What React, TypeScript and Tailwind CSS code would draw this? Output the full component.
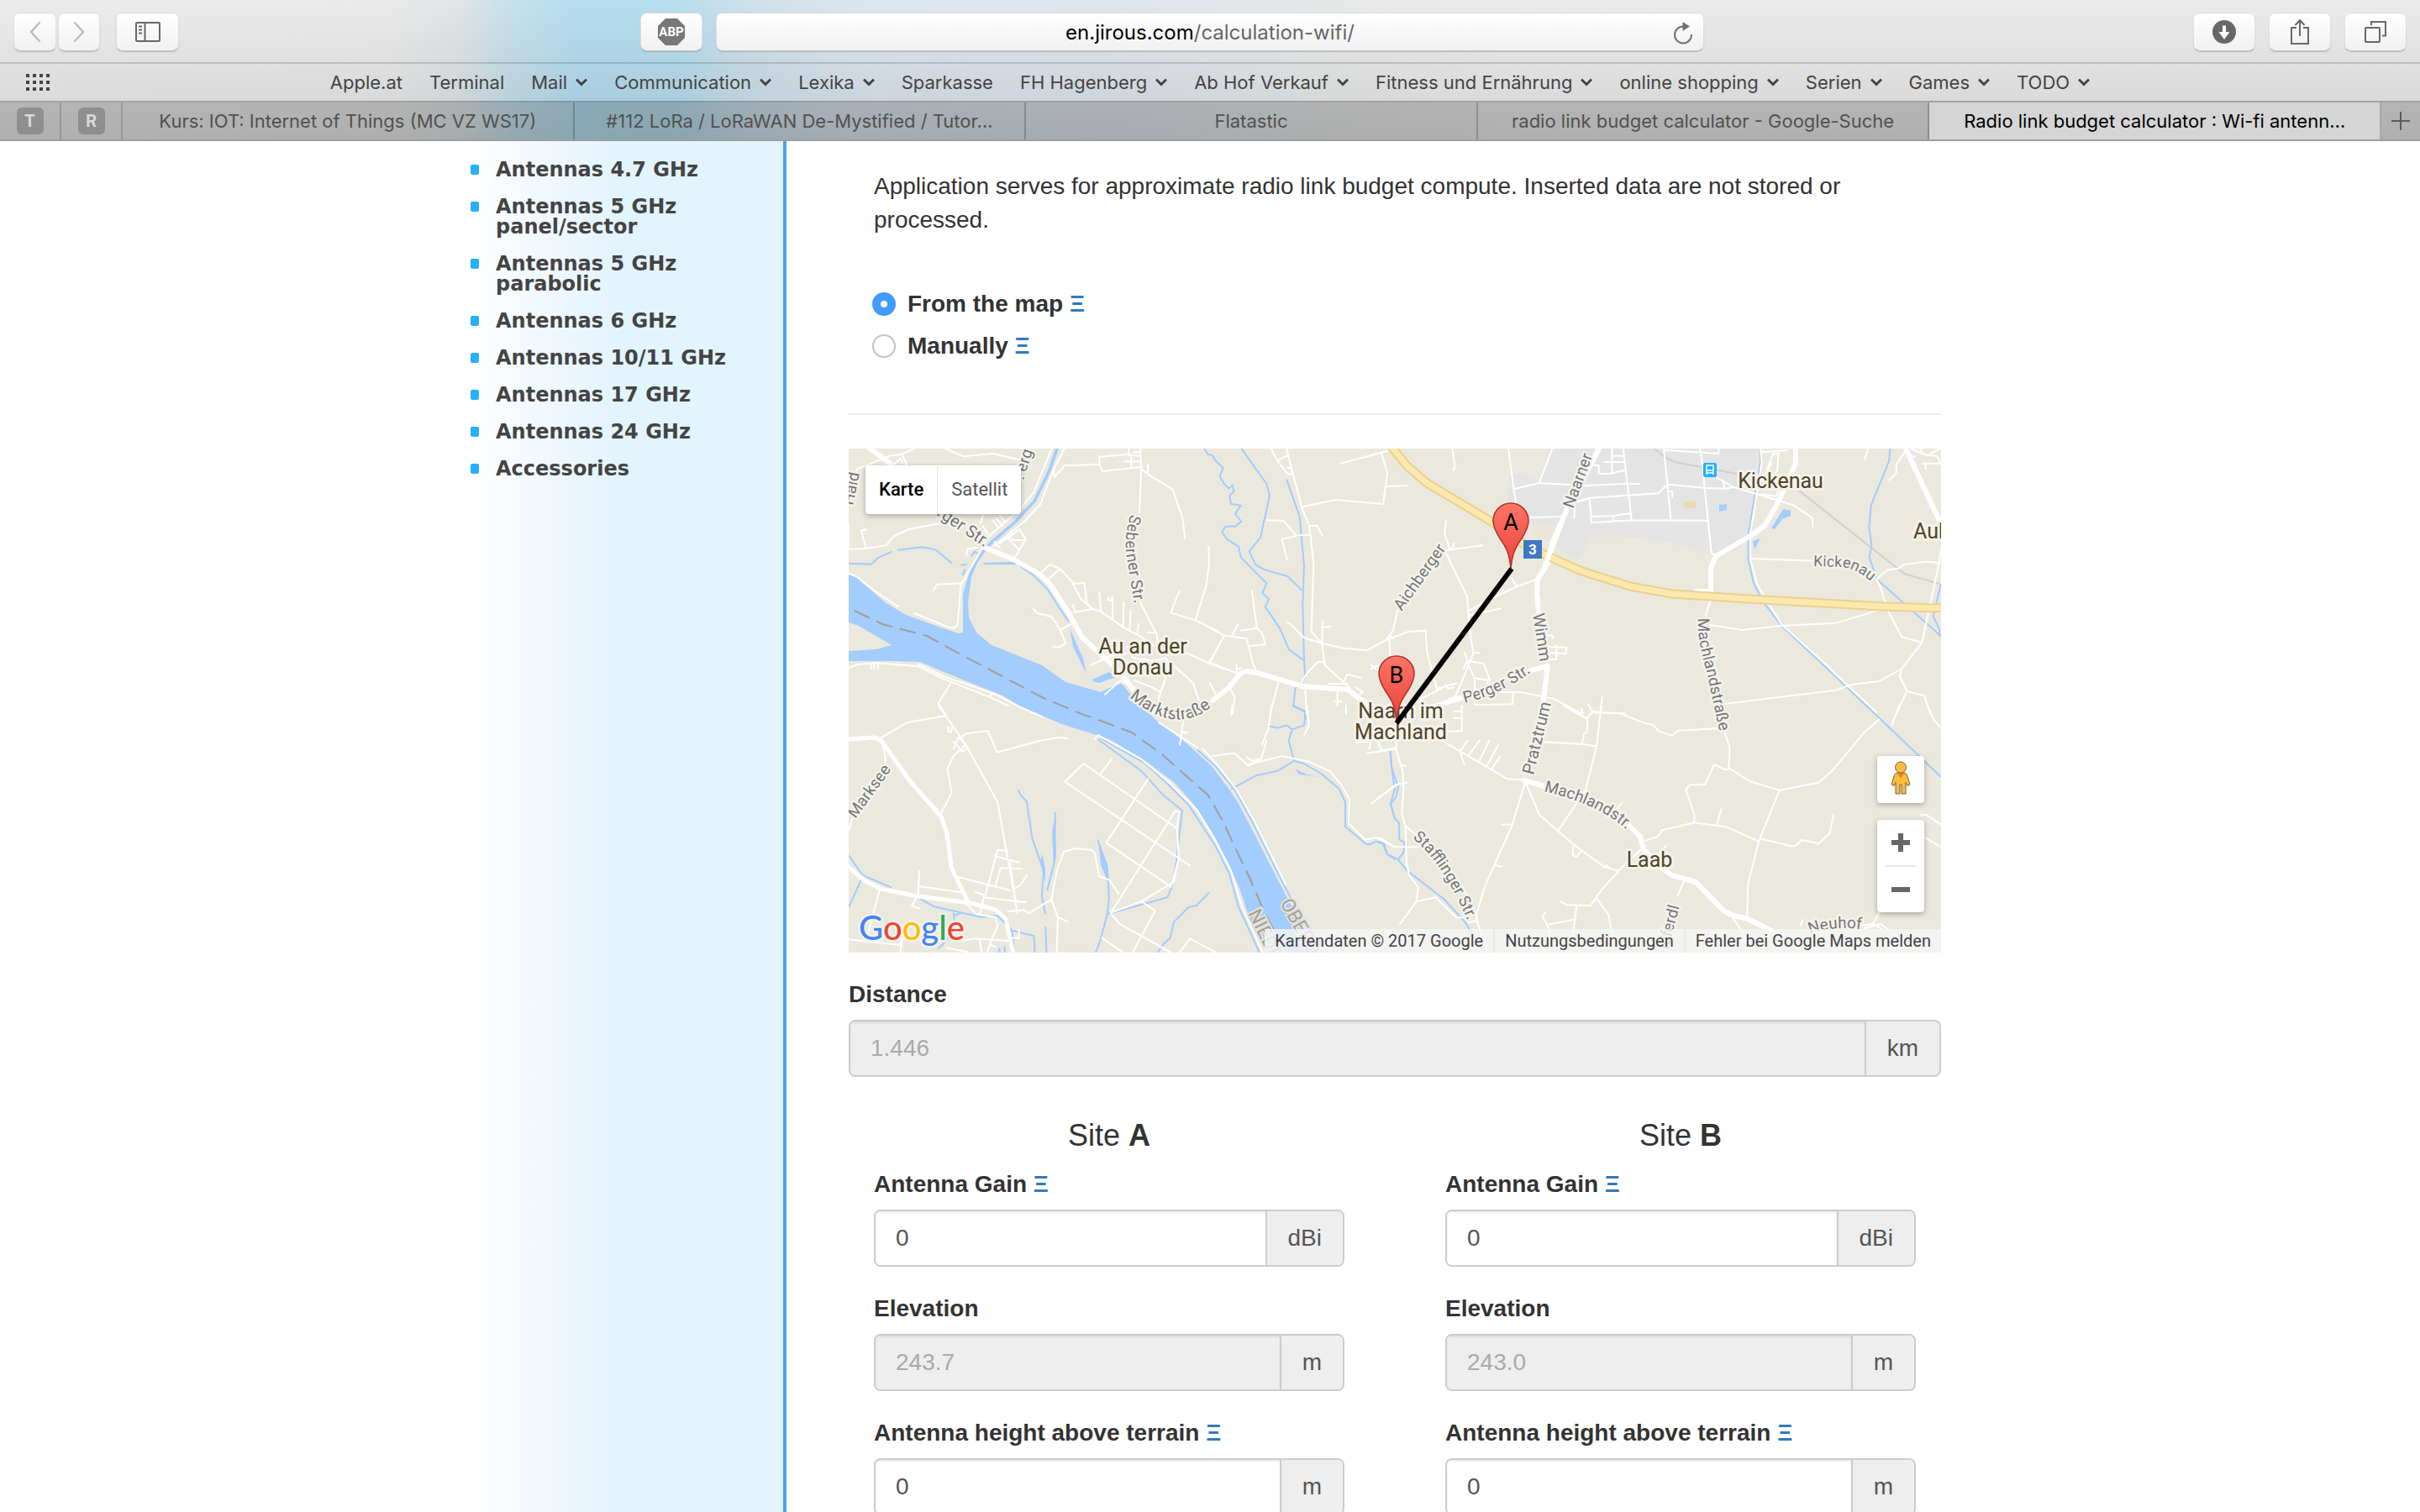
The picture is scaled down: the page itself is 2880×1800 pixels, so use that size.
import React from "react";

/* ---------- browser chrome ---------- */

const bookmarks: { label: string; menu?: boolean }[] = [
  { label: "Apple.at" },
  { label: "Terminal" },
  { label: "Mail", menu: true },
  { label: "Communication", menu: true },
  { label: "Lexika", menu: true },
  { label: "Sparkasse" },
  { label: "FH Hagenberg", menu: true },
  { label: "Ab Hof Verkauf", menu: true },
  { label: "Fitness und Ernährung", menu: true },
  { label: "online shopping", menu: true },
  { label: "Serien", menu: true },
  { label: "Games", menu: true },
  { label: "TODO", menu: true },
];

const tabs = [
  "Kurs: IOT: Internet of Things (MC VZ WS17)",
  "#112 LoRa / LoRaWAN De-Mystified / Tutor…",
  "Flatastic",
  "radio link budget calculator - Google-Suche",
  "Radio link budget calculator : Wi-fi antenn…",
];

function ToolButton({ label, className, children }: { label: string; className: string; children: React.ReactNode }) {
  return (
    <button
      type="button"
      aria-label={label}
      className={
        "flex h-[46px] items-center justify-center rounded-lg border border-black/10 border-b-black/25 bg-gradient-to-b from-white to-[#f1f1f1] shadow-[0_1px_1px_rgba(0,0,0,0.15)] " +
        className
      }
    >
      {children}
    </button>
  );
}

function Toolbar() {
  return (
    <div className="grid h-[76px] grid-cols-[1fr_1176px_1fr] items-center gap-4 border-b-2 border-black/15 px-4 pt-0.5">
      <div className="flex">
        <ToolButton label="Back" className="w-[51px]">
          <svg width="14" height="26" viewBox="0 0 14 26" fill="none" stroke="#bdbdbd" strokeWidth="2.5">
            <path d="M12.5 1.5 2 13l10.500 11.500" />
          </svg>
        </ToolButton>
        <ToolButton label="Forward" className="ml-0.5 w-[50px]">
          <svg width="14" height="26" viewBox="0 0 14 26" fill="none" stroke="#bdbdbd" strokeWidth="2.5">
            <path d="M1.500 1.500 12 13 1.500 24.500" />
          </svg>
        </ToolButton>
        <ToolButton label="Sidebar" className="ml-[19px] w-[75px]">
          <svg width="30" height="24" viewBox="0 0 30 24" fill="none" stroke="#686868" strokeWidth="2">
            <rect x="1" y="1" width="28" height="22" rx="1" />
            <path d="M11.500 1v22" />
            <path d="M4 5.500h4M4 9.500h4M4 13.500h4" />
          </svg>
        </ToolButton>
        <ToolButton label="Adblock Plus" className="ml-auto w-[74px]">
          <svg width="34" height="34" viewBox="0 0 34 34">
            <path d="M10 1h14l9 9v14l-9 9H10l-9-9V10z" fill="#787878" />
            <text x="17" y="22" textAnchor="middle" fontFamily="Roboto" fontWeight="700" fontSize="15" fill="#fff">
              ABP
            </text>
          </svg>
        </ToolButton>
      </div>
      <div className="relative flex h-[46px] items-center justify-center rounded-lg border border-black/10 border-b-black/25 bg-gradient-to-b from-white to-[#f1f1f1] pt-0.5 text-[24px] text-[#666] shadow-[0_1px_1px_rgba(0,0,0,0.15)]">
        <span>
          <span className="text-black">en.jirous.com</span>/calculation-wifi/
        </span>
        <button type="button" aria-label="Reload" className="absolute right-3">
          <svg width="24" height="28" viewBox="0 0 24 28" fill="none" stroke="#707070" strokeWidth="2">
            <path d="M12 6.500a10 10 0 1 0 10 9.500" />
            <path d="M11.500 1 20 6.500l-8.500 5.500z" fill="#707070" stroke="none" />
          </svg>
        </button>
      </div>
      <div className="flex justify-end gap-4">
        <ToolButton label="Downloads" className="w-[74px]">
          <svg width="28" height="28" viewBox="0 0 28 28">
            <circle cx="14" cy="14" r="14" fill="#686868" />
            <path d="M12 6.500h4V14h4.500L14 23l-6.500-9H12z" fill="#fff" />
          </svg>
        </ToolButton>
        <ToolButton label="Share" className="w-[74px]">
          <svg width="24" height="32" viewBox="0 0 24 32" fill="none" stroke="#686868" strokeWidth="2">
            <path d="M8 11H2v19h20V11h-6M12 21V3M6.500 8 12 2l5.500 6" />
          </svg>
        </ToolButton>
        <ToolButton label="Show all tabs" className="w-[74px]">
          <svg width="26" height="26" viewBox="0 0 26 26" fill="none" stroke="#686868" strokeWidth="2">
            <rect x="1" y="8" width="17" height="17" rx="1" />
            <path d="M8 5V1h17v16.500h-4" />
          </svg>
        </ToolButton>
      </div>
    </div>
  );
}

function BookmarksBar() {
  return (
    <div className="relative flex h-[46px] items-center justify-center border-b-2 border-black/25 text-[22px] text-[#444]">
      <button type="button" aria-label="Top sites" className="absolute left-[31px]">
        <svg width="28" height="20" viewBox="0 0 28 20" fill="none" stroke="#444" strokeWidth="4" strokeDasharray="4 4">
          <path d="M0 2h28M0 10h28M0 18h28" />
        </svg>
      </button>
      <nav className="flex gap-8 whitespace-nowrap">
        {bookmarks.map((b) => (
          <a key={b.label} href="#" className="flex items-center gap-2.5">
            {b.label}
            {b.menu && (
              <svg width="14" height="10" viewBox="0 0 14 10" fill="none" stroke="currentColor" strokeWidth="3">
                <path d="m1 1.500 6 6 6-6" />
              </svg>
            )}
          </a>
        ))}
      </nav>
    </div>
  );
}

function TabBar() {
  return (
    <div className="flex h-[46px] border-b-2 border-[#9b9fa1] bg-black/17 text-[22px] text-[#515151]">
      {["T", "R"].map((t) => (
        <button key={t} type="button" className="flex w-[73px] items-center justify-center border-r-2 border-black/15">
          <span className="flex size-8 items-center justify-center rounded-md bg-black/20 text-[20px] font-bold text-[#d8d8d8]">
            {t}
          </span>
        </button>
      ))}
      {tabs.map((t, i) => (
        <button
          key={t}
          type="button"
          className={
            "min-w-0 flex-1 border-r-2 border-black/20 text-center whitespace-nowrap " +
            (i === 4 ? "bg-[#d5d5d5] text-black" : "")
          }
        >
          {t}
        </button>
      ))}
      <button type="button" aria-label="New tab" className="flex w-[46px] items-center justify-center">
        <svg width="22" height="22" viewBox="0 0 22 22" stroke="#5c5c5c" strokeWidth="2">
          <path d="M11 0v22M0 11h22" />
        </svg>
      </button>
    </div>
  );
}

/* ---------- sidebar ---------- */

const categories = [
  "Antennas 4.7 GHz",
  "Antennas 5 GHz panel/sector",
  "Antennas 5 GHz parabolic",
  "Antennas 6 GHz",
  "Antennas 10/11 GHz",
  "Antennas 17 GHz",
  "Antennas 24 GHz",
  "Accessories",
];

function Sidebar() {
  return (
    <aside className="w-[376px] shrink-0 border-r-4 border-[#4ba3ee] bg-[linear-gradient(to_right,#ffffff_0,#fafdff_30px,#f2f8fe_80px,#eaf6fd_130px,#e2f4fd_180px)] pt-[22px] font-['DejaVu_Sans',sans-serif] text-[24px] leading-[24px] font-bold text-[#444]">
      <ul className="flex flex-col gap-5">
        {categories.map((c) => (
          <li key={c} className="flex gap-5">
            <span className="mt-1.5 h-3 w-2.5 shrink-0 rounded-[2px] bg-[#27b0f8]" />
            <a href="#" className="max-w-[290px]">
              {c}
            </a>
          </li>
        ))}
      </ul>
    </aside>
  );
}

/* ---------- map ---------- */

function Label({ id, d, size = 19, children }: { id: string; d: string; size?: number; children: React.ReactNode }) {
  return (
    <>
      <path id={id} d={d} fill="none" stroke="none" />
      <text fontSize={size}>
        <textPath href={"#" + id}>{children}</textPath>
      </text>
    </>
  );
}

function Pin({ x, y, children }: { x: number; y: number; children: React.ReactNode }) {
  return (
    <g transform={`translate(${x} ${y})`}>
      <path
        d="M0 0C-2-20-6-26-13-36-18-44-21-50-21-57a21 21 0 0 1 42 0C21-50 18-44 13-36 6-26 2-20 0 0z"
        fill="url(#pin)"
        stroke="#b3312c"
        strokeWidth="1.500"
      />
      <text x="0" y="-46" textAnchor="middle" fontSize="27" fill="#000">
        {children}
      </text>
    </g>
  );
}

function MapDrawing() {
  return (
    <svg
      className="absolute inset-0 size-full [&_path]:[vector-effect:non-scaling-stroke]"
      viewBox="0 0 1300 600"
      preserveAspectRatio="xMidYMid slice"
      fontFamily="Roboto, sans-serif"
      role="img"
      aria-label="Map of Naarn im Machland"
    >
      <defs>
        <linearGradient id="pin" x1="0" y1="0" x2="0" y2="1">
          <stop offset="0" stopColor="#fd7567" />
          <stop offset="1" stopColor="#ea4238" />
        </linearGradient>
      </defs>
      <rect width="1300" height="600" fill="#ebe9de" />

      {/* built-up area */}
      <path
        d="M832 0 822 38 812 33 800 28 786 33 783 60 785 90 845 92 838 110 855 128 868 131 874 125 885 105 895 104 930 106 980 112 1025 126 1060 120 1070 108 1080 50 1080 0z"
        fill="#e4e4e4"
      />
      <path d="M812 92h30l-5 18-20-2z" fill="#ebe6d9" />
      <path d="M994 63h15v8h-15z" fill="#e9dbb8" />
      <path d="M1036 67l9-1v7l-9 2zM1098 95l14-23 9 2v6l-10 4-9 12zM1076 110l9-3-7 13z" fill="#a3ccff" />

      {/* Danube */}
      <path
        d="M0 149 10 154 43 183 68 198 107 212 130 220 136 219 136 173 145 143 157 123 170 109 197 86 220 61 237 26 246 0H250L240 28 223 63 200 88 165 119 153 136 146 153 142 183 143 201 152 219 170 234 230 258 258 278 300 290 318 281 325 280 345 304 369 326 400 349 432 378 453 406 463 421 484 461 512 516 533 556 554 589 559 600H499L480 569 466 526 453 496 432 456 411 424 388 398 352 371 310 346 251 327 203 306 183 294 133 274 85 254 57 253 0 253V241L33 239 51 234 12 211 0 207z"
        fill="#a3ccff"
      />
      <path d="M283 262 290 275 310 266 318 272 298 279 291 277zM160 136l36-1 4 3h-39zM263 214l4 22 16 32-4-18z" fill="#a3ccff" />

      {/* streams */}
      <g fill="none" stroke="#a3ccff" strokeWidth="2" strokeLinejoin="round">
        <g transform="translate(-10 -14) scale(.33333)">
          <path d="M30 452 110 455 135 432 185 410 M205 405 290 394 340 403 400 453M430 458l22-3M437 495l8-22M467 427l13-17 18 12" />
          <path d="M640 460 690 495 740 545 775 600 815 660" />
          <path d="M1300 42 1312 62 1328 66 1340 85 1360 105 1367 112 1355 140 1372 170 1388 185 1400 172 1405 195 1390 210 1395 240 1430 245 1410 275 1432 303 1410 320 1375 320 1363 340 1380 365 1422 392 1430 430 1522 523 1507 558 1530 580 1517 607 1570 685 1602 760 1657 800" />
        </g>
        <g transform="translate(430 -14) scale(.33333)">
          <path d="M112 42 202 168 213 210 180 360 140 410 163 457 195 475 277 498 328 548M273 152 320 285 336 460 331 600 336 800 340 860 320 882 305 898 297 962 340 983 341 1010" />
        </g>
        <g transform="translate(870 -14) scale(.33333)">
          <path d="M643 42 645 90 625 210 602 350 602 440 620 520 655 590 720 675 880 825 1060 995 1290 1215M1108 42 1105 85 1040 245 1033 325 1042 385 1034 430 1060 508 1290 712M1290 525 1262 640 1285 690 1283 712" />
        </g>
        <g transform="translate(-10 306) scale(.4209 .33333)">
          <path d="M1280 0 1315 20 1312 70 1278 85 1262 70 1237 80 1210 72M1278 85 1268 125 1283 198 1237 233 1175 250 1105 298M1283 198 1310 207 1360 243 1410 297 1428 345V432L1487 495H1500L1515 485 1535 495 1545 530 1570 550" />
          <path d="M728 120 850 232 915 322 967 375 958 470 950 560 937 650 925 685 755 745 735 840 722 882M755 575 760 690 755 745M728 480 755 575M735 115 860 205 930 285 985 355 1060 500 1100 600 1125 715 1185 882M1010 158 1060 215 1115 300 1165 415 1250 630 1275 690" />
          <path d="M503 300 510 320 527 342 543 475 575 590 570 680 580 745M608 380 605 560 585 660M580 790 583 882M24 535 60 600 75 612 145 650M60 620 24 720M220 685 265 718 398 755 445 750 485 803 548 823 550 882M1043 668 1007 714 985 720 943 773 933 830 915 850 897 882M322 750 345 740M320 740 325 790 292 850 275 870M1555 160 1560 230 1568 300 1555 350 1570 410M450 882V865M465 882V860M485 803 493 882" />
        </g>
        <g transform="translate(630 306) scale(.43365 .33333)">
          <path d="M33 160 37 220 55 290 50 325 35 350 45 400 58 420V478L73 488 70 525 55 550 80 590 180 690 240 775 260 820 295 882M0 485 15 488 25 530 55 550" />
        </g>
      </g>
      <path d="M230 482l4 18v16l-6-22zM246 435l1 52-3 10-2-40zM297 465l4 15 7 20v15l-8-20z" fill="#a3ccff" />
      <path d="M531 381 545 388 560 391 536 388z" fill="#a3ccff" />

      {/* railway */}
      <g fill="none" stroke="#d0d0d2" strokeWidth="2" transform="translate(870 -14) scale(.33333)">
        <path d="M265 42 300 70 340 90 430 107 560 132M780 190 1160 490 1285 525" />
      </g>

      {/* minor roads */}
      <g fill="none" stroke="#fff" strokeWidth="2" strokeLinejoin="round" strokeLinecap="round">
        <g transform="translate(-10 -14) scale(.33333)">
          <path d="M50 150 60 115 135 85 180 67 220 62 265 42M220 62 237 100M195 95 215 78 222 92M375 42 440 70 545 60 640 82M30 402 95 398 165 387 190 355 245 330 340 312 400 310M92 398 75 335 93 331M30 402V310" />
          <path d="M755 42 690 200 640 260 525 360 500 410 430 530 425 600 418 675 400 685 263 630M800 42 760 120 715 240 660 300 550 390M430 523 345 527 333 548M30 488 60 500 115 545 207 607M762 120 763 145 800 103 925 98 925 72 1030 62M925 98 935 123 1075 108M1030 42V65L1072 68V42M1038 62 1040 107M1015 88H1072M1045 55H1072" />
          <path d="M1072 68 1075 115 1068 270M1075 115 1097 133 1187 188 1222 290 1231 363M1099 100 1097 130M1315 392 1317 450 1307 530 1268 655 1180 628 1210 552M1268 655 1350 695M1070 590 1130 705 1135 755M500 310 510 280M510 320 525 345M545 297 565 325M555 290 580 318M570 280 585 300M570 380 620 345 640 330 662 365 640 405 620 435M600 365 640 405M605 360 618 370 660 368M640 330 662 368M450 425 455 400 490 395M550 375 570 398" />
          <path d="M712 490 750 455 785 472 835 525 872 522 880 595 900 615M735 515 785 472M830 525 860 580 900 615 932 625 1010 680 1075 715 1120 745M835 627 900 615M925 555 930 622M957 575V585H970V572M972 575V650M1012 593 1010 678M1037 620 1033 690M1065 668 1060 705M1098 700H1120M690 615 703 630 755 643 785 690 805 738 780 752 760 750M785 690 825 668M830 600 840 625M895 815 960 785 1035 770M1025 750 1045 790 1120 800 1160 790 1260 880 1280 940M1120 800 1090 830M1165 850 1135 940M1200 755 1315 808 1350 750M1315 808 1370 830M1050 870 1115 895 1140 910" />
          <path d="M30 825 60 813 130 808 280 820 370 865 530 928 600 960M280 812 380 860 470 890 560 922 640 965 720 1000M110 810V828M120 815 122 828M135 812V830M393 882 350 952 375 990M530 928 548 915M945 920 1000 870 1050 895" />
        </g>
        <g transform="translate(430 -14) scale(.33333)">
          <path d="M218 42 240 85 278 133 297 135M240 85 280 65M273 42 297 135 327 250 355 320 370 455 362 695 400 740 410 815 500 898M275 110H290L292 130M332 250 447 225 618 240 633 130 613 60M630 177 703 175M467 95 635 50M205 298 263 300 307 352 355 350M307 355 257 365 275 437M355 318 383 317 400 352M865 42 875 110 868 120M843 298 838 350 857 400M872 380 865 400M972 388 845 405 840 410 918 570 927 690 940 775M927 620 1000 580 1095 535 1168 508M1073 500 1095 535M927 637 1040 613M670 620 653 692 630 725 560 763 477 755 400 738 335 717 295 675 277 663M400 740 402 660M403 680 430 677M640 725 643 780M630 725 705 697 770 692 775 770 810 900M640 708 655 720" />
          <path d="M150 550 167 683 110 692M167 683 185 700 198 742 142 747M0 683 50 710 130 720 155 815 165 835M100 670 78 710M50 710 0 805 95 845M95 815V840M110 828H95M0 880 20 920M70 895 88 930 80 990M243 880 215 990M340 905 345 990M320 885 350 840 385 805 410 803M425 882H490M455 905V960M445 945H470M480 870 490 848 538 860M520 895 545 910 535 920M575 815 600 835M575 830 600 815 610 850M905 830 918 800 977 810 1000 870 945 862 920 810M945 862V890 957L1080 955 1082 915M940 775 875 930 855 935M940 770 960 772M908 770 918 795M810 900 880 880M840 885 850 900 870 895M940 912 1110 912 1225 935 1330 990M1205 710 1220 708 1225 720M1210 750 1273 752 1270 775 1210 772M1210 795H1237V745M755 935 825 900M990 880 998 870M750 935 770 960" />
          <path d="M1065 42 1085 190 1093 240M1085 187 1175 165 1350 175M1175 165 1222 42M1145 288 1255 285M1145 285V292M1300 290 1303 235 1350 222" />
        </g>
        <g transform="translate(870 -14) scale(.33333)">
          <path d="M115 42V130M155 42 185 295M115 68H155M90 90H158M35 100 68 102V132H105L160 120M0 175 165 168 215 168M0 228 35 218 280 202 313 170 300 42M35 218 42 307 185 298 460 299M42 285 120 282 185 272M120 282V300M300 47 495 60 497 42M430 42 437 92 470 415 485 425M313 170 325 290M320 195H330V215M313 170 450 183 520 185 550 180M512 155 517 183M488 145 550 180 700 225 765 245 830 290 832 320M313 150V170" />
          <path d="M690 62 710 60 705 120 690 150M650 55 740 48M665 130 690 60M685 95 670 120M650 205 700 212 710 195M645 42 650 90 625 250 608 350 610 440 635 530 720 670 870 805 890 820 900 835 1060 985M610 435 840 443M467 580 450 640M465 672 580 690 720 675 915 665 1065 620M510 955 915 905 970 885 1070 873 1150 828 1222 735 1282 455 1290 400M1060 508 1075 540 1100 620 1150 715 1222 735M1060 508 1100 475 1140 470 1155 457 1240 446 1285 450M1150 828 1143 855 1168 908 1230 925 1252 990M1168 908 1130 990M1030 42 1017 82M1105 155 1130 130V100L1160 55M1183 42 1235 65 1275 68 1290 95M1225 95H1290M1235 97V115M1215 42 1225 60M1250 60 1290 42M1185 70H1195M30 955 45 980 80 985 160 988M80 930 75 985M5 970 10 985" />
        </g>
        <g transform="translate(-10 306) scale(.4209 .33333)">
          <path d="M115 115 190 60 297 37M278 0 355 140 445 345 500 735M118 125 128 190 125 240M24 445 35 400M305 75 305 92 313 95 318 70M355 140 320 180 303 225 315 312 283 390M320 155 335 112 360 150 347 165 320 130M345 110 355 100 417 90 443 167 565 125 620 113 643 118M767 192 737 242M688 207 635 272 988 571M688 207 950 437M870 262 752 490 935 647 957 547 952 437 958 380 948 375 765 740M720 120 728 105 850 190 935 280 1010 375 1060 480 1105 590 1135 715 1195 882M335 613 480 660M220 645 343 667M223 592 220 680M410 678 445 515 472 520M437 537 505 560M453 580 440 640M453 580 515 583M480 560 500 740M490 655 510 640 528 605M383 667 405 675 405 690 395 745M405 685 525 703M355 705 385 745 435 755M200 715 225 725M205 710 215 685M112 655 75 830M24 835 170 855 175 800M170 882 175 835" />
          <path d="M475 735 520 730 532 742 597 692 612 590 632 522 665 510 710 515 720 528 732 610 760 622 787 672M597 692 615 755 612 882M615 755 643 772M765 740 850 700 943 630 955 555M765 742 790 780 935 882M850 697 890 733 827 882M740 830 800 882M960 882 988 832 1060 880M438 755 445 785 422 855 415 882M425 855 440 862M400 882 395 840M300 865 360 880M340 840 380 832 475 840M505 800 505 830 480 830M1205 125 1190 190 1165 198 1150 185M1190 190 1155 215 1115 170 1050 180M1155 210 1250 180 1325 200 1385 235 1415 280 1440 335 1437 420 1485 480 1510 472 1530 475 1568 505M1220 0 1210 85 1192 140M1320 0 1325 70 1312 105M1502 350 1568 285M960 140 970 55M968 97H980M1108 0 1105 32M900 60 1010 150M1025 155 1065 210 1120 300 1170 410 1260 640M1430 30V0M1460 130 1500 130 1495 155M1490 170 1568 155M1530 155 1520 130" />
        </g>
        <g transform="translate(630 306) scale(.43365 .33333)">
          <path d="M50 120V160L68 235 70 290 65 385 75 430 78 560 85 605 110 648 105 700 60 780M0 165 50 150M65 215H75M0 330 55 280 80 275M75 430 130 490 170 560 230 640 270 745M0 475 45 505 110 505M105 700 158 685 215 757 235 757 250 775 270 768M270 745 272 770 300 882M175 125 355 262 400 265M245 125 225 165 237 210M278 125 248 180M305 125 278 198M330 140 300 212M335 182 312 225M208 20H228M208 45H230V90L185 93M230 0V45M405 270 367 430 295 640 270 745M340 425H367M322 570 340 575M405 275 443 390 540 500 620 575 658 590 725 510M495 445 570 300 600 145 612 0M530 340 550 320M670 345 655 370M535 505 535 535 545 540 557 520M620 580 628 570 635 582M500 700 520 712 583 715 615 655 660 592M545 712 535 820M600 690 632 745 645 830 640 882M458 738 452 755 470 800 465 860M467 782 535 765M455 130 560 137 597 145M510 0 555 35 573 45 587 25M575 45 573 95 565 100 560 137M587 25 665 28 730 62 755 68 770 92 807 107 823 90 948 80 965 150 962 222 1020 270 1102 302 1208 275 1245 235 1335 95 1375 50M962 228 950 228 923 210 897 283 855 283 845 300 868 390V418L955 433 1045 485 1102 302M868 418 780 445 768 468 735 482M930 425 942 370M1048 475 1135 502H1145L1163 480 1210 493 1240 455 1250 390M1045 485 1015 640 1013 750M1410 70 1430 0M1508 0 1525 50 1545 80M1490 390H1505L1545 425M1500 470 1545 505M840 625 822 680M970 750 1000 810 1035 882M1160 785 1165 765M1330 785 1358 780 1375 740M1358 780 1385 800M1335 795 1380 780 1430 830 1500 882M765 540 790 500M700 540 725 512M0 130 10 160M150 80 170 125" />
        </g>
      </g>

      {/* larger local roads */}
      <g fill="none" stroke="#fff" strokeWidth="6" strokeLinejoin="round" strokeLinecap="round">
        <path d="M26 0 52 20M160 117 196 132 228 150 240 162 262 196 278 225 310 254 330 275 345 296M433 300 452 285 466 268 474 265 486 267 540 283 594 287 608 298 625 308M689 310 718 300 740 294M812 264 832 259 826 306" />
        <path d="M893 0 855 72 850 84 838 110 832 136 820 156 819 172 821 195M1127 0V18L1107 62 1100 75 1090 92 1070 106 1032 128 1026 142V170M1009 170h14M1258 0 1300 90" />
        <path d="M0 346 32 344 39 348 73 396 110 438 117 458 122 498 142 540M0 498 18 514 38 524 82 533 145 541 175 549 187 560 190 575 196 600" strokeWidth="5" />
        <path d="M804 395 828 402M929 449 942 462 946 477 968 500 980 508 1008 516 1041 550 1053 556 1068 559 1110 580" />
      </g>

      {/* federal road */}
      <g fill="none" strokeLinejoin="round">
        <path d="M646 -2 664 20 688 41 760 84 810 118 870 145 885 150 930 164 980 173 1070 179 1230 188 1290 190 1302 189" stroke="#e8d28f" strokeWidth="11" />
        <path d="M646 -2 664 20 688 41 760 84 810 118 870 145 885 150 930 164 980 173 1070 179 1230 188 1290 190 1302 189" stroke="#ffe8ae" strokeWidth="7" />
        <path d="M848 90 828 140" stroke="#fff" strokeWidth="6" />
      </g>

      {/* state border on the river */}
      <path
        d="M7 193 40 209 93 223 133 245 177 268 230 296 277 316 289 320 337 338 373 364 394 383 428 413 445 443 459 473 478 513 495 553 506 573"
        fill="none"
        stroke="#a29e96"
        strokeWidth="2"
        strokeDasharray="20 9"
      />

      {/* street names */}
      <g fill="#757575" stroke="#f3f2ec" strokeWidth="5" strokeLinejoin="round" paintOrder="stroke">
        <Label id="haid" d="M5 68 15 20">Haid</Label>
        <Label id="erg" d="M208 38 226 -20">. erg</Label>
        <Label id="ger" d="M104 79 176 127" size={20}>rger Str.</Label>
        <Label id="seberner" d="M336 78Q326 108 332 135L340 185">Seberner Str.</Label>
        <Label id="markt" d="M334 296C358 317 382 325 400 322S430 312 446 290" size={20}>Marktstraße</Label>
        <Label id="aich" d="M658 194 712 118">Aichberger</Label>
        <Label id="naarner" d="M862 72 892 -10">Naarner</Label>
        <Label id="wimm" d="M814 197 824 262" size={20}>Wimm</Label>
        <Label id="perger" d="M733 303Q778 292 818 262">Perger Str.</Label>
        <Label id="pratz" d="M815 389 838 295" size={20}>Pratztrum</Label>
        <Label id="machstrasse" d="M1011 202Q1010 230 1021 265L1037 340">Machlandstraße</Label>
        <Label id="machstr" d="M827 408Q900 425 932 460">Machlandstr.</Label>
        <Label id="staff" d="M671 464Q705 490 736 560">Stafflinger Str.</Label>
        <Label id="neuhof" d="M1144 578Q1170 568 1204 572">Neuhof</Label>
        <Label id="ferdl" d="M975 597 994 525">ldferdl</Label>
        <Label id="marksee" d="M8 441 52 380">Marksee</Label>
        <Label id="kickstr" d="M1148 140 1182 141Q1200 143 1220 161" size={18}>Kickenau</Label>
      </g>
      <g fill="#ada087" stroke="#dfe4e6" strokeWidth="4" paintOrder="stroke">
        <Label id="ober" d="M513 541 560 625" size={23}>OBERÖS</Label>
        <Label id="nieder" d="M475 553 512 628" size={23}>NIEDER</Label>
      </g>

      {/* places */}
      <g fill="#4f4426" stroke="#f3f2ec" strokeWidth="6" strokeLinejoin="round" paintOrder="stroke" fontSize="25" textAnchor="middle">
        <text x="350" y="244">Au an der</text>
        <text x="350" y="269">Donau</text>
        <text x="657" y="321">Naarn im</text>
        <text x="657" y="346">Machland</text>
        <text x="1109" y="47">Kickenau</text>
        <text x="953" y="498">Laab</text>
        <text x="1267" y="107" textAnchor="start">Auhof</text>
      </g>

      {/* transit stop */}
      <rect x="1017" y="17" width="16" height="17" rx="2" fill="#20b2fb" />
      <g fill="none" stroke="#fff" strokeWidth="1.500">
        <rect x="1021" y="20" width="8" height="9" />
        <path d="M1021 26h8M1022 29l-1 2M1028 29l1 2" />
      </g>
      <rect x="803" y="109" width="22" height="22" fill="#3f78c4" />
      <text x="814" y="126" textAnchor="middle" fontSize="17" fontWeight="700" fill="#fff">
        3
      </text>

      <Pin x={788} y={143}>A</Pin>
      <Pin x={652} y={325}>B</Pin>
      <path d="M789 143 652 327" stroke="#000" strokeWidth="6" />

      <text x="12" y="585" fontFamily="Lato" fontSize="40" fontWeight="500" stroke="#f3f2ec" strokeWidth="5" paintOrder="stroke">
        <tspan fill="#4285f4">G</tspan>
        <tspan fill="#ea4335">o</tspan>
        <tspan fill="#fbbc05">o</tspan>
        <tspan fill="#4285f4">g</tspan>
        <tspan fill="#34a853">l</tspan>
        <tspan fill="#ea4335">e</tspan>
      </text>
    </svg>
  );
}

function MapView() {
  return (
    <section className="relative h-[600px] overflow-hidden bg-[#ebe9de] font-['Roboto',sans-serif]">
      <MapDrawing />
      <div className="absolute top-5 left-5 flex h-[58px] rounded-[4px] bg-white text-[22px] shadow-[0_2px_6px_rgba(0,0,0,0.3)]">
        <button type="button" className="border-r border-[#e5e5e5] px-4 font-medium text-black">
          Karte
        </button>
        <button type="button" className="px-4 text-[#565656]">
          Satellit
        </button>
      </div>
      <div className="absolute right-5 bottom-12 flex w-14 flex-col gap-5">
        <button
          type="button"
          aria-label="Street View"
          className="flex h-14 items-center justify-center rounded-[4px] bg-white pb-1 shadow-[0_2px_6px_rgba(0,0,0,0.3)]"
        >
          <svg width="24" height="40" viewBox="0 0 24 40" fill="#fbbc3c" stroke="#6e6547" strokeWidth="1">
            <path d="M7 14h10l2.500 2.500L23 28l-3 1.500-2-4V39h-5V28h-2v11H6V25.500l-2 4L1 28l3.500-11.500z" />
            <circle cx="12" cy="7.500" r="6.500" />
            <path d="M8 14.500h8l-4 6z" fill="#e07f2a" stroke="none" />
          </svg>
        </button>
        <div className="flex h-[110px] flex-col rounded-[4px] bg-white shadow-[0_2px_6px_rgba(0,0,0,0.3)]">
          <button type="button" aria-label="Zoom in" className="flex flex-1 items-center justify-center">
            <svg width="22" height="22" viewBox="0 0 22 22" stroke="#666" strokeWidth="6">
              <path d="M11 0v22M0 11h22" />
            </svg>
          </button>
          <div className="mx-2.5 h-0.5 bg-[#e6e6e6]" />
          <button type="button" aria-label="Zoom out" className="flex flex-1 items-center justify-center">
            <svg width="22" height="22" viewBox="0 0 22 22" stroke="#666" strokeWidth="6">
              <path d="M0 11h22" />
            </svg>
          </button>
        </div>
      </div>
      <div className="absolute right-0 bottom-0 flex h-7 items-center gap-0.5 text-[20px] leading-7 text-[#444]">
        <span className="bg-[#f5f5f5]/80 px-3">Kartendaten © 2017 Google</span>
        <a href="#" className="bg-[#f5f5f5]/80 px-3">
          Nutzungsbedingungen
        </a>
        <a href="#" className="bg-[#f5f5f5]/80 px-3">
          Fehler bei Google Maps melden
        </a>
      </div>
    </section>
  );
}

/* ---------- form ---------- */

function Hint() {
  return (
    <a href="#" className="text-[#337ab7]">
      Ξ
    </a>
  );
}

function Field({
  id,
  label,
  value,
  unit,
  hint,
  disabled,
}: {
  id: string;
  label: string;
  value: string;
  unit: string;
  hint?: boolean;
  disabled?: boolean;
}) {
  return (
    <div className="mb-[30px]">
      <div className="mb-2.5 font-bold">
        <label htmlFor={id}>{label}</label> {hint && <Hint />}
      </div>
      <div className="flex h-[68px] overflow-hidden rounded-lg border-2 border-[#ccc]">
        <input
          id={id}
          defaultValue={value}
          disabled={disabled}
          className="min-w-0 flex-1 bg-white px-6 text-[#555] shadow-[inset_0_2px_2px_rgba(0,0,0,0.075)] disabled:bg-[#eee] disabled:text-[#aaa]"
        />
        <span className="flex items-center border-l-2 border-[#ccc] bg-[#eee] px-[25px] text-[#555]">{unit}</span>
      </div>
    </div>
  );
}

function Source({ id, label, checked }: { id: string; label: string; checked?: boolean }) {
  return (
    <div className="flex items-center font-bold">
      <input
        type="radio"
        id={id}
        name="source"
        defaultChecked={checked}
        className="mr-3.5 size-7 appearance-none rounded-full border-2 border-[#c4c4c4] bg-white checked:border-10 checked:border-[#3f9bfc]"
      />
      <span>
        <label htmlFor={id}>{label}</label> <Hint />
      </span>
    </div>
  );
}

function Site({ name, elevation }: { name: string; elevation: string }) {
  return (
    <section className="px-[30px]">
      <h4 className="mt-5 mb-[18px] text-center text-[36px] leading-10">
        Site <b>{name}</b>
      </h4>
      <Field id={"gain" + name} label="Antenna Gain" value="0" unit="dBi" hint />
      <Field id={"elevation" + name} label="Elevation" value={elevation} unit="m" disabled />
      <Field id={"height" + name} label="Antenna height above terrain" value="0" unit="m" hint />
    </section>
  );
}

export default function App() {
  return (
    <div className="flex h-screen flex-col overflow-hidden bg-white">
      <header className="shrink-0 bg-[linear-gradient(to_bottom,rgba(0,0,0,0),rgba(0,0,0,0.1)),linear-gradient(to_right,#ececec_0%,#eaeaea_16%,#e0e5e7_19%,#c8e1ec_21%,#b6ddf0_24%,#b8ddee_28%,#cfe1ec_31%,#dce5ee_35%,#dfe5ec_45%,#e8e9e9_56%,#ebebeb_62%)] font-['Inter',sans-serif]">
        <Toolbar />
        <BookmarksBar />
        <TabBar />
      </header>
      <div className="mx-auto flex min-h-0 w-full max-w-[1760px] flex-1">
        <Sidebar />
        <main className="mr-2.5 ml-[74px] min-w-0 flex-1 font-['Liberation_Sans',sans-serif] text-[28px] leading-10 text-[#333]">
          <p className="mx-[30px] mt-[34px] mb-[60px]">
            Application serves for approximate radio link budget compute. Inserted data are not stored or processed.
          </p>
          <div className="mx-7 flex flex-col gap-2.5">
            <Source id="map" label="From the map" checked />
            <Source id="manual" label="Manually" />
          </div>
          <hr className="mt-[60px] mb-10 border-t-2 border-[#eee]" />
          <MapView />
          <div className="mt-[30px]">
            <Field id="distance" label="Distance" value="1.446" unit="km" disabled />
          </div>
          <div className="grid grid-cols-2 gap-[60px]">
            <Site name="A" elevation="243.7" />
            <Site name="B" elevation="243.0" />
          </div>
        </main>
      </div>
    </div>
  );
}
